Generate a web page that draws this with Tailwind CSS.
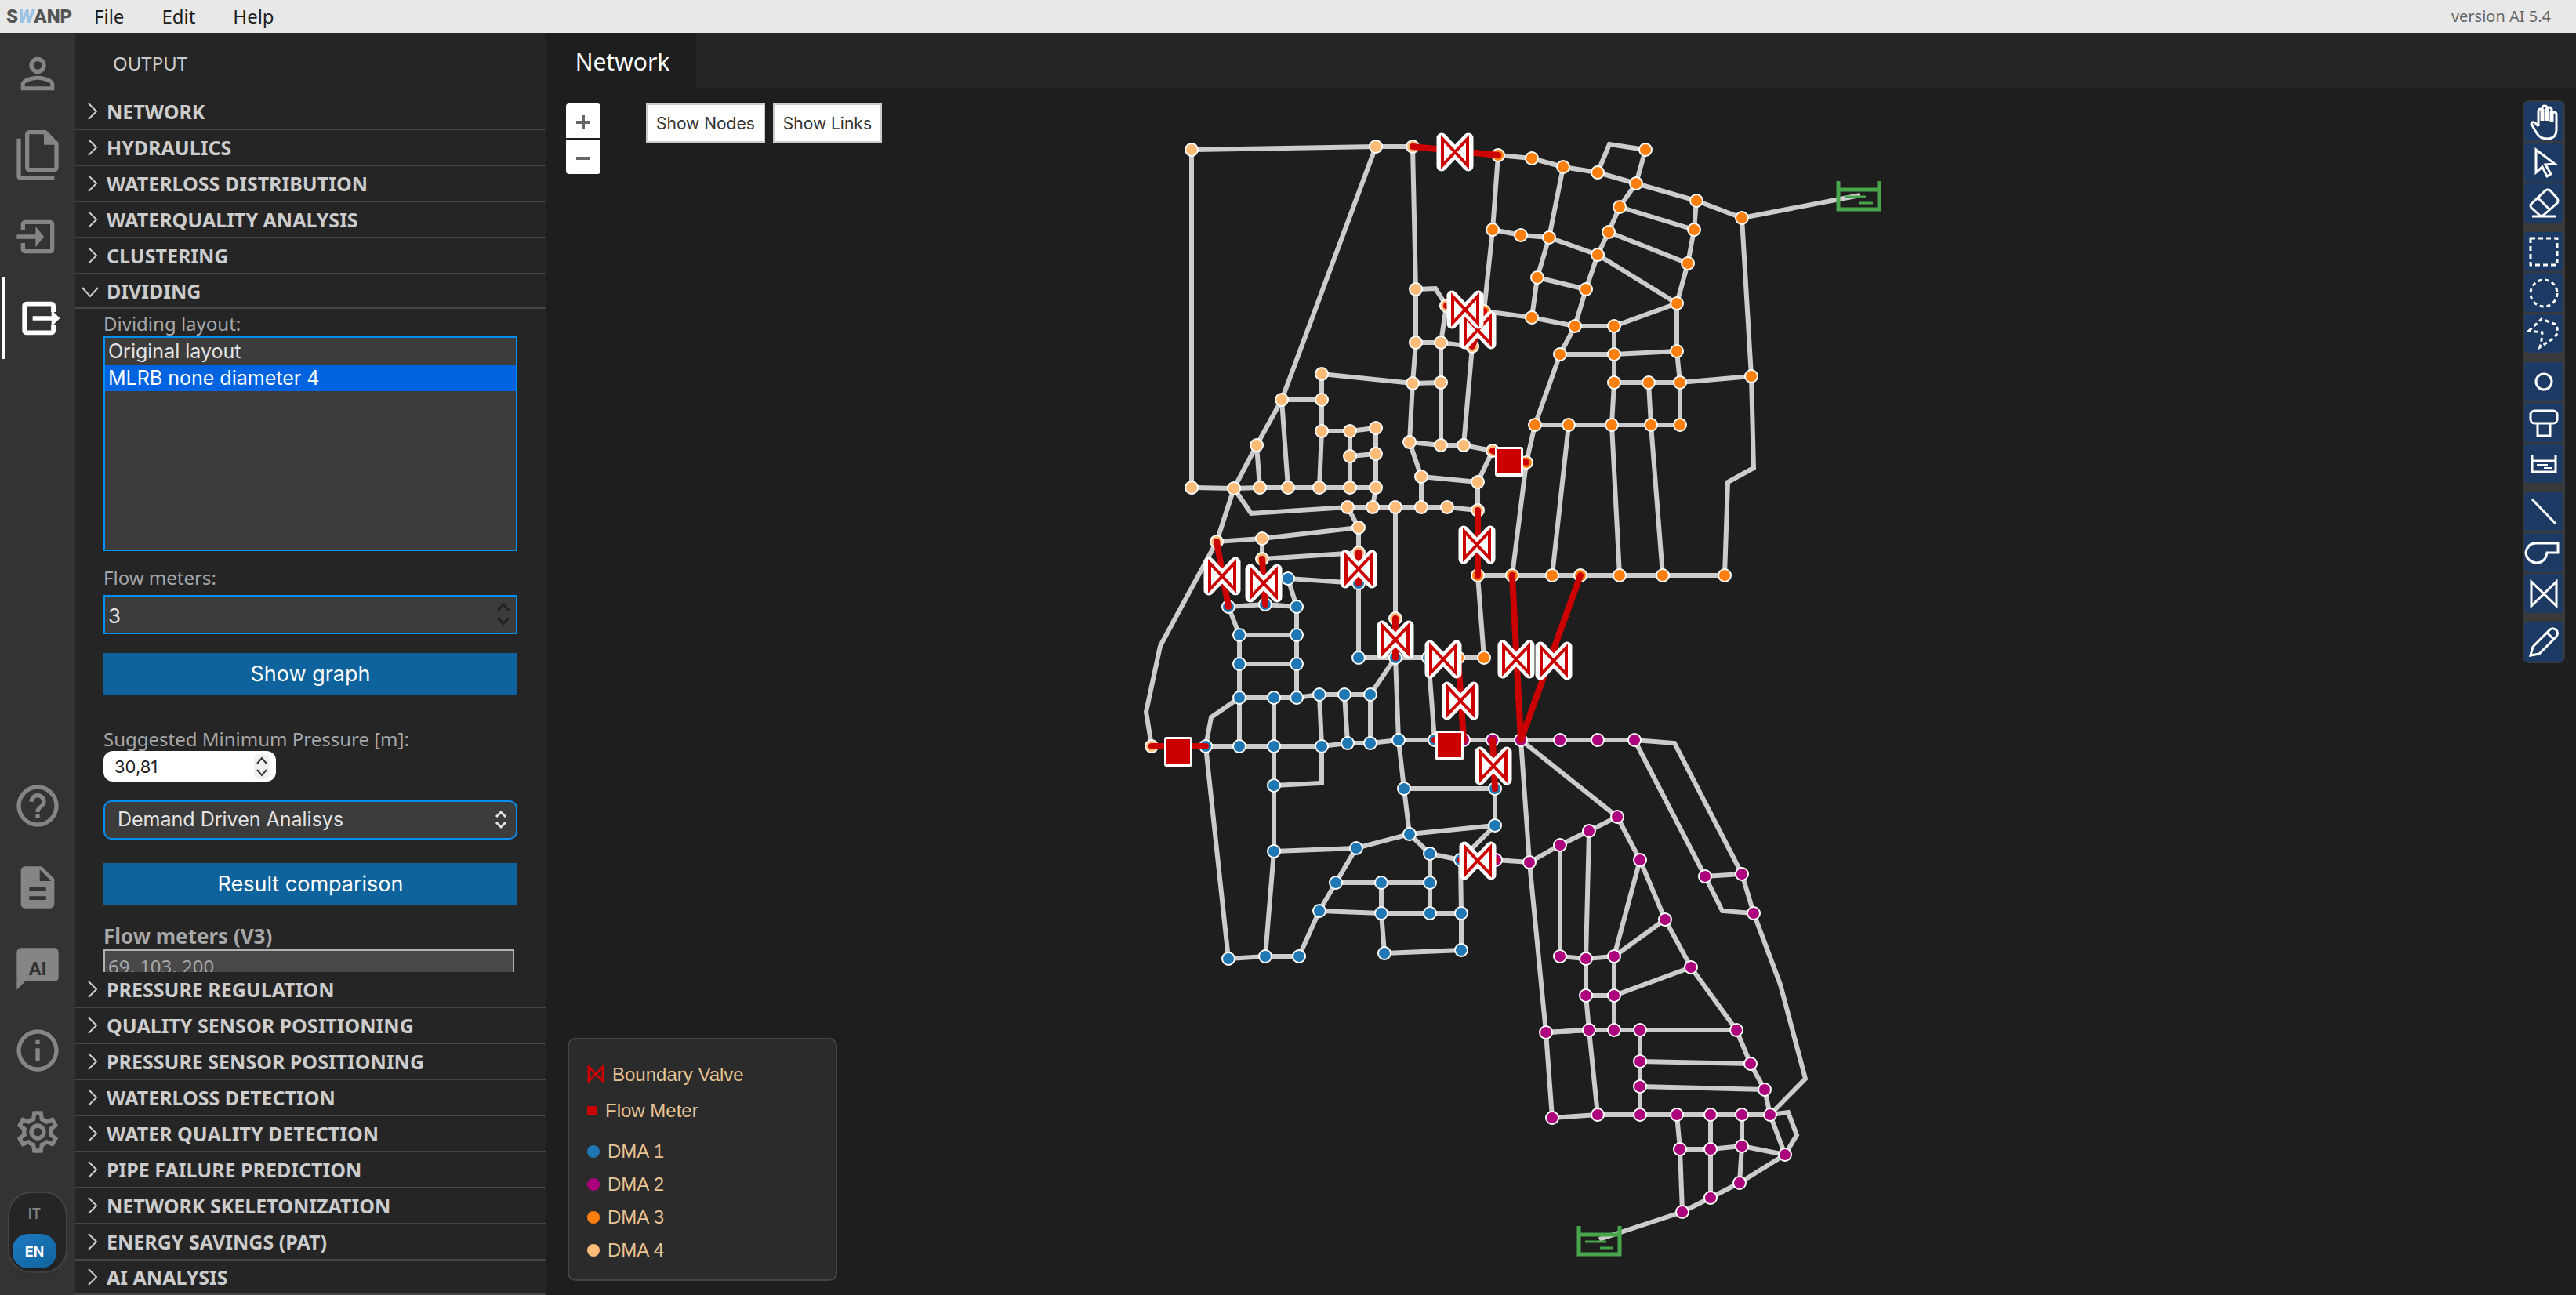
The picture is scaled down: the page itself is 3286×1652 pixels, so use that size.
<!DOCTYPE html>
<html lang="en">
<head>
    <meta charset="UTF-8" />
    <meta name="viewport" content="width=device-width, initial-scale=1.0" />
    <title>SWANP - Network</title>
    <script src="https://cdn.jsdelivr.net/npm/@tailwindcss/browser@4"></script>
    <style>
        body { font-family: 'Noto Sans', 'Open Sans', sans-serif; }
        .ui { font-family: 'Inter', 'Liberation Sans', sans-serif; }
        .legend { font-family: 'Liberation Sans', Arial, sans-serif; }
        .logo { font-family: 'Roboto', sans-serif; }
        .layouts option { padding: 2px 4px 0; height: 34px; line-height: 34px; }
        .layouts option:checked { background: linear-gradient(#0064e1, #0064e1); color: #fff; }
        input[type=number] { appearance: textfield; }
        input[type=number]::-webkit-inner-spin-button { display: none; }
    </style>
</head>
<body class="bg-[#1e1e1e] text-[#cccccc] h-screen flex flex-col overflow-hidden text-[24px]">

    <header class="h-[42px] shrink-0 bg-[#e8e8e8] text-[#1e1e1e] flex items-center pl-2 pr-8">
        <span class="logo w-28 text-[24px] font-black text-[#555555] leading-none">S<span class="text-[#9cc3e4] italic">W</span>ANP</span>
        <nav class="flex gap-12">
            <a href="#">File</a>
            <a href="#">Edit</a>
            <a href="#">Help</a>
        </nav>
        <span class="ml-auto text-[20px] text-[#666666]">version AI 5.4</span>
    </header>

    <div class="flex flex-1 min-h-0">

        <!-- Activity bar -->
        <aside class="w-24 shrink-0 bg-[#333333] text-[#858585] flex flex-col">
            <button aria-label="User" class="h-[104px] flex items-center justify-center">
                <svg class="size-16" viewBox="0 0 24 24" fill="currentColor"><path d="M12,4A4,4 0 0,1 16,8A4,4 0 0,1 12,12A4,4 0 0,1 8,8A4,4 0 0,1 12,4M12,6A2,2 0 0,0 10,8A2,2 0 0,0 12,10A2,2 0 0,0 14,8A2,2 0 0,0 12,6M12,13C14.67,13 20,14.33 20,17V20H4V17C4,14.33 9.33,13 12,13M12,14.9C9.03,14.9 5.9,16.36 5.9,17V18.1H18.1V17C18.1,16.36 14.97,14.9 12,14.9Z"/></svg>
            </button>
            <button aria-label="Files" class="h-[104px] flex items-center justify-center">
                <svg class="size-16" viewBox="0 0 24 24" fill="currentColor"><path fill-rule="evenodd" d="M8 0H16L22 6V18A2 2 0 0 1 20 20H8A2 2 0 0 1 6 18V2A2 2 0 0 1 8 0ZM8 2V18H20V7H15V2Z"/><path d="M2 4H4V22H20V24H4A2 2 0 0 1 2 22Z"/></svg>
            </button>
            <button aria-label="Input" class="h-[104px] flex items-center justify-center">
                <svg class="size-16" viewBox="0 0 24 24" fill="currentColor"><path d="M6 4H18A2 2 0 0 1 20 6V18A2 2 0 0 1 18 20H6A2 2 0 0 1 4 18V15H6V18H18V6H6V9H4V6A2 2 0 0 1 6 4Z"/><path d="M2 11H11V7L15 12L11 17V13H2Z"/></svg>
            </button>
            <button aria-label="Output" class="h-[104px] flex items-center justify-center text-white border-l-4 border-white ml-0.5 pr-2">
                <svg class="size-16" viewBox="0 0 24 24" fill="currentColor"><path d="M7 4H19A2 2 0 0 1 21 6V9H18.800V6.200H7.200V17.800H18.800V15H21V18A2 2 0 0 1 19 20H7A2 2 0 0 1 5 18V6A2 2 0 0 1 7 4Z"/><path d="M10 11H19V8L23 12L19 16V13H10Z"/></svg>
            </button>

            <div class="mt-auto mb-7 flex flex-col">
                <button aria-label="Help" class="h-[104px] flex items-center justify-center">
                    <svg class="size-16" viewBox="0 0 24 24" fill="currentColor"><path d="M11,18H13V16H11V18M12,2A10,10 0 0,0 2,12A10,10 0 0,0 12,22A10,10 0 0,0 22,12A10,10 0 0,0 12,2M12,20C7.590,20 4,16.410 4,12C4,7.590 7.590,4 12,4C16.410,4 20,7.590 20,12C20,16.410 16.410,20 12,20M12,6A4,4 0 0,0 8,10H10A2,2 0 0,1 12,8A2,2 0 0,1 14,10C14,12 11,11.750 11,15H13C13,12.750 16,12.500 16,10A4,4 0 0,0 12,6Z"/></svg>
                </button>
                <button aria-label="Report" class="h-[104px] flex items-center justify-center">
                    <svg class="size-16" viewBox="0 0 24 24" fill="currentColor"><path d="M13,9H18.500L13,3.500V9M6,2H14L20,8V20A2,2 0 0,1 18,22H6C4.890,22 4,21.100 4,20V4C4,2.890 4.890,2 6,2M16,18V16.200H8V18H16M16,13.800V12H8V13.800H16Z"/></svg>
                </button>
                <button aria-label="AI chat" class="h-[104px] flex items-center justify-center">
                    <svg class="size-16" viewBox="0 0 24 24" fill="currentColor"><path d="M4 2H20A2 2 0 0 1 22 4V16A2 2 0 0 1 20 18H6L2 22V4A2 2 0 0 1 4 2Z"/><text x="12" y="15" text-anchor="middle" font-size="9" font-weight="700" font-family="Roboto, sans-serif" fill="#333333">AI</text></svg>
                </button>
                <button aria-label="Info" class="h-[104px] flex items-center justify-center">
                    <svg class="size-16" viewBox="0 0 24 24" fill="currentColor"><path d="M11,9H13V7H11M12,20C7.590,20 4,16.410 4,12C4,7.590 7.590,4 12,4C16.410,4 20,7.590 20,12C20,16.410 16.410,20 12,20M12,2A10,10 0 0,0 2,12A10,10 0 0,0 12,22A10,10 0 0,0 22,12A10,10 0 0,0 12,2M11,17H13V11H11V17Z"/></svg>
                </button>
                <button aria-label="Settings" class="h-[104px] flex items-center justify-center">
                    <svg class="size-16" viewBox="0 0 24 24" fill="currentColor"><path d="M12,8A4,4 0 0,1 16,12A4,4 0 0,1 12,16A4,4 0 0,1 8,12A4,4 0 0,1 12,8M12,10A2,2 0 0,0 10,12A2,2 0 0,0 12,14A2,2 0 0,0 14,12A2,2 0 0,0 12,10M10,22C9.75,22 9.54,21.82 9.5,21.58L9.13,18.93C8.5,18.68 7.96,18.34 7.44,17.94L4.95,18.95C4.73,19.03 4.46,18.95 4.34,18.73L2.34,15.27C2.21,15.05 2.27,14.78 2.46,14.63L4.57,12.97L4.5,12L4.57,11L2.46,9.37C2.27,9.22 2.21,8.95 2.34,8.73L4.34,5.27C4.46,5.05 4.73,4.96 4.95,5.05L7.44,6.05C7.96,5.66 8.5,5.32 9.13,5.07L9.5,2.42C9.54,2.18 9.75,2 10,2H14C14.25,2 14.46,2.18 14.5,2.42L14.87,5.07C15.5,5.32 16.04,5.66 16.56,6.05L19.05,5.05C19.27,4.96 19.54,5.05 19.66,5.27L21.66,8.73C21.79,8.95 21.73,9.22 21.54,9.37L19.43,11L19.5,12L19.43,13L21.54,14.63C21.73,14.78 21.79,15.05 21.66,15.27L19.66,18.73C19.54,18.95 19.27,19.04 19.05,18.95L16.56,17.95C16.04,18.34 15.5,18.68 14.87,18.93L14.5,21.58C14.46,21.82 14.25,22 14,22H10M11.25,4L10.88,6.61C9.68,6.86 8.62,7.5 7.85,8.39L5.44,7.35L4.69,8.65L6.8,10.2C6.4,11.37 6.4,12.64 6.8,13.8L4.68,15.36L5.43,16.66L7.86,15.62C8.63,16.5 9.68,17.14 10.87,17.38L11.24,20H12.76L13.13,17.39C14.32,17.14 15.37,16.5 16.14,15.62L18.57,16.66L19.32,15.36L17.2,13.81C17.6,12.64 17.6,11.37 17.2,10.2L19.31,8.65L18.56,7.35L16.15,8.39C15.38,7.5 14.32,6.86 13.12,6.62L12.75,4H11.25Z"/></svg>
                </button>
                <div class="ui mt-6 mx-2.5 h-[104px] rounded-[30px] border-2 border-[#444444] bg-[#252526] flex flex-col justify-between pt-3 pb-1 pl-1 pr-3 text-[18px]">
                    <button class="h-7 font-medium">IT</button>
                    <button class="h-11 rounded-[20px] bg-linear-to-br from-[#1f7ac2] to-[#0e639c] text-white font-bold shadow-lg">EN</button>
                </div>
            </div>
        </aside>

        <!-- Output side panel -->
        <section class="w-[600px] shrink-0 bg-[#252526] flex flex-col">
            <h2 class="h-[78px] shrink-0 pl-12 flex items-center">OUTPUT</h2>
            <div id="sections-top" class="shrink-0"></div>

            <div class="flex-1 min-h-0 overflow-hidden pl-9 pr-9 text-[#a7a7a7]">
                <label for="layout" class="block h-[35px] leading-[37px]">Dividing layout:</label>
                <select id="layout" size="8" class="layouts ui block w-full h-[274px] border-2 border-[#0090f1] bg-[#3c3c3c] text-[#e4e4e4] text-[25px] overflow-hidden outline-none">
                    <option>Original layout</option>
                    <option selected>MLRB none diameter 4</option>
                </select>

                <label for="meters" class="block mt-4 h-10 leading-[35px]">Flow meters:</label>
                <div class="relative">
                    <input id="meters" type="number" value="3" class="ui block w-full h-[50px] border-2 border-[#0090f1] bg-[#3c3c3c] text-[#e4e4e4] text-[26px] pl-1 pt-0.5 outline-none" />
                    <svg class="absolute right-2 top-2 w-5 h-8" viewBox="0 0 20 32" fill="none" stroke="#222222" stroke-width="3"><path d="M3 12L10 4L17 12M3 21L10 29L17 21"/></svg>
                </div>
                <button class="ui block w-full h-[54px] mt-6 bg-[#0e639c] text-white text-[27px]">Show graph</button>

                <label for="pressure" class="block mt-10 h-[31px] leading-[31px]">Suggested Minimum Pressure [m]:</label>
                <div class="relative w-[220px]">
                    <input id="pressure" type="text" inputmode="decimal" value="30,81" class="ui block w-full h-[39px] rounded-xl bg-white text-[#222222] text-[22px] pl-3.5 outline-none" />
                    <svg class="absolute right-2 top-1 w-5 h-8" viewBox="0 0 20 32" fill="none"><rect width="20" height="32" rx="6" fill="#f1f1f1"/><path d="M4 12L10 5L16 12M4 20L10 27L16 20" stroke="#333333" stroke-width="2"/></svg>
                </div>

                <div class="relative mt-6">
                    <select aria-label="Analysis type" class="ui block w-full h-[50px] appearance-none rounded-[10px] border-2 border-[#0090f1] bg-[#3c3c3c] text-[#e4e4e4] text-[25px] pl-4 outline-none">
                        <option>Demand Driven Analisys</option>
                    </select>
                    <svg class="absolute right-3 top-3 w-[18px] h-[26px]" viewBox="0 0 18 26" fill="none" stroke="#e4e4e4" stroke-width="3"><path d="M3 9L9 3L15 9M3 16L9 22L15 16"/></svg>
                </div>
                <button class="ui block w-full h-[54px] mt-[30px] bg-[#0e639c] text-white text-[27px]">Result comparison</button>

                <label for="meters-v3" class="block mt-5 h-9 leading-[38px] font-bold text-[26px]">Flow meters (V3)</label>
                <textarea id="meters-v3" readonly class="block w-[524px] h-24 resize-none border-2 border-[#b0b0b0] bg-[#484848] text-[#a7a7a7] px-1 py-0.5 outline-none">69, 103, 200</textarea>
            </div>

            <div id="sections-bottom" class="shrink-0"></div>
        </section>

        <!-- Map -->
        <main class="flex-1 min-w-0 flex flex-col">
            <div class="h-[70px] shrink-0 bg-[#252526] flex">
                <button class="w-48 pt-0.5 pl-1 bg-[#1e1e1e] text-white text-[30px]">Network</button>
            </div>
            <div class="relative flex-1 min-h-0">
                <svg id="map" class="absolute inset-0 w-full h-full" viewBox="696 112 2590 1540">
                    <defs>
                        <g id="valve">
                            <path d="M-17 -18L17 18V-18L-17 18Z" fill="#fff" stroke="#fff" stroke-width="13" stroke-linejoin="round"/>
                            <path d="M-16 -17L16 17V-17L-16 17Z" fill="#fff" stroke="#cc0000" stroke-width="4"/>
                        </g>
                        <g id="meter">
                            <rect x="-18" y="-19" width="36" height="38" rx="3" fill="#fff"/>
                            <rect x="-15" y="-16" width="30" height="31" fill="#cc0000"/>
                        </g>
                        <g id="reservoir" fill="none" stroke="#49a54b">
                            <path d="M-26 -19V17H26V-19M-26 -8H26" stroke-width="5"/>
                            <path d="M-18 1H9M1 9H18" stroke-width="3"/>
                        </g>
                    </defs>
                    <g id="pipes" fill="none" stroke="#cccccc" stroke-width="6"></g>
                    <g id="nodes" stroke="#ffffff" stroke-width="2"></g>
                    <g id="cuts" fill="none" stroke="#cc0000" stroke-width="8" stroke-linecap="round"></g>
                    <g id="symbols"></g>
                </svg>

                <div class="absolute left-[26px] top-5 flex flex-col gap-0.5 text-[#666666]">
                    <button aria-label="Zoom in" class="size-11 pt-1 bg-white rounded-t flex items-center justify-center">
                        <svg class="size-[18px]" viewBox="0 0 18 18" stroke="currentColor" stroke-width="4"><path d="M0 9H18M9 0V18"/></svg>
                    </button>
                    <button aria-label="Zoom out" class="size-11 pt-1 bg-white rounded-b flex items-center justify-center">
                        <svg class="size-[18px]" viewBox="0 0 18 18" stroke="currentColor" stroke-width="4"><path d="M0 9H18"/></svg>
                    </button>
                </div>

                <div class="ui absolute left-32 top-5 flex gap-2.5 text-[21px] text-[#333333]">
                    <button class="h-[50px] px-[11px] pt-0.5 bg-white border-2 border-[#cccccc]">Show Nodes</button>
                    <button class="h-[50px] px-[11px] pt-0.5 bg-white border-2 border-[#cccccc]">Show Links</button>
                </div>

                <div class="legend absolute left-7 bottom-[18px] w-[344px] h-[310px] rounded-[10px] border-2 border-[#444444] bg-[#2b2b2b] text-[#e8c494] pl-[23px] pt-[22px]">
                    <ul>
                        <li class="flex items-center h-[46px] gap-2.5">
                            <svg class="w-[22px] h-6" viewBox="0 0 22 24" fill="none" stroke="#cc0000" stroke-width="3"><path d="M2 2L20 20V2L2 20Z"/></svg>
                            Boundary Valve
                        </li>
                        <li class="flex items-center h-[46px] gap-[11px]"><span class="size-3 bg-[#cc0000]"></span>Flow Meter</li>
                    </ul>
                    <ul class="mt-2">
                        <li class="flex items-center h-[42px] gap-2.5"><span class="size-4 rounded-full bg-[#1f77b4]"></span>DMA 1</li>
                        <li class="flex items-center h-[42px] gap-2.5"><span class="size-4 rounded-full bg-[#ad007c]"></span>DMA 2</li>
                        <li class="flex items-center h-[42px] gap-2.5"><span class="size-4 rounded-full bg-[#ff7f0e]"></span>DMA 3</li>
                        <li class="flex items-center h-[42px] gap-2.5"><span class="size-4 rounded-full bg-[#ffbb78]"></span>DMA 4</li>
                    </ul>
                </div>

                <!-- Drawing tools -->
                <div id="tools" class="absolute right-3.5 top-4 p-0.5 rounded-lg bg-[#3a3a3a] flex flex-col gap-3"></div>
            </div>
        </main>
    </div>

    <script>
        // Accordion headers
        const topSections = ['NETWORK', 'HYDRAULICS', 'WATERLOSS DISTRIBUTION', 'WATERQUALITY ANALYSIS', 'CLUSTERING', 'DIVIDING'];
        const bottomSections = ['PRESSURE REGULATION', 'QUALITY SENSOR POSITIONING', 'PRESSURE SENSOR POSITIONING', 'WATERLOSS DETECTION',
            'WATER QUALITY DETECTION', 'PIPE FAILURE PREDICTION', 'NETWORK SKELETONIZATION', 'ENERGY SAVINGS (PAT)', 'AI ANALYSIS'];

        function sectionHeader(name) {
            const open = name === 'DIVIDING';
            const arrow = open ? 'M1 7L11 18L21 7' : 'M9 1L19 11L9 21';
            return `
                <button aria-expanded="${open}" class="w-full h-[46px] last:h-11 border-b-2 border-[#454545] pl-2 flex items-center gap-2.5 font-bold text-[25px] text-[#cccccc]">
                    <svg class="size-[22px]" viewBox="0 0 22 22" fill="none" stroke="#cccccc" stroke-width="2"><path d="${arrow}"/></svg>
                    <span class="pt-0.5">${name}</span>
                </button>`;
        }
        document.getElementById('sections-top').innerHTML = topSections.map(sectionHeader).join('');
        document.getElementById('sections-bottom').innerHTML = bottomSections.map(sectionHeader).join('');

        // Drawing tools, grouped
        const tools = [
            [
                ['Pan', '<path d="M18 31V12q0-3 3-3q2 0 2 2V8q0-3 3-3t3 3V10q0-3 3-3t3 3V15q0-2 3-2t3 3V35Q41 47 29 47Q20 47 16 40L9 28Q10 24 14 27L18 31"/><path stroke-width="5" d="M23 9V24M29 8V24M35 12V25"/>'],
                ['Select', '<path d="M15 9L39 27L27 28L34 40L29 43L23 31L15 38Z"/>'],
                ['Erase', '<path d="M27 9Q30 7 33 9L42 19Q44 22 42 25L25 40Q22 43 19 40L9 31Q7 28 9 26ZM18 19L32 33M10 42H40"/>']
            ],
            [
                ['Select rectangle', '<path stroke-dasharray="6 4" d="M8 8H42V42H8Z"/>'],
                ['Select circle', '<circle stroke-dasharray="5 4" cx="25" cy="26" r="17"/>'],
                ['Select lasso', '<path stroke-dasharray="5 4" d="M6 22L22 7L41 14L43 24L38 31L20 43L22 34L23 24Z"/>']
            ],
            [
                ['Add node', '<circle cx="25" cy="25" r="10"/>'],
                ['Add tank', '<rect x="8" y="10" width="34" height="16" rx="5"/><path d="M17 26V42H33V26"/>'],
                ['Add reservoir', '<path d="M10 15V36H40V15M10 22H40"/><path stroke-width="2" d="M16 27H30M25 31H35"/>']
            ],
            [
                ['Add pipe', '<path d="M10 9L40 40"/>'],
                ['Add pump', '<path d="M43 13V25H29Q27 38 15 38Q3 36 2 25Q4 13 15 13Z"/>'],
                ['Add valve', '<path d="M9 10L41 41V10L9 41Z"/>']
            ],
            [
                ['Edit', '<path d="M8 42L11 31L33 9Q37 6 41 10Q44 14 41 18L19 40ZM29 13L37 21"/>']
            ]
        ];
        document.getElementById('tools').innerHTML = tools.map(group =>
            '<div class="flex flex-col gap-0.5">' + group.map(([label, shape]) => `
                <button aria-label="${label}" class="size-[50px] rounded bg-[#1c3a63]">
                    <svg class="size-[50px]" viewBox="0 0 50 50" fill="none" stroke="#ffffff" stroke-width="3">${shape}</svg>
                </button>`).join('') + '</div>').join('');

        // Network nodes, one list per DMA (b = DMA 1, m = DMA 2, c = DMA 3, a = DMA 4)
        const nodes = {
            a: [[1520,191],[1755,187],[1802,187],[1806,369],[1845,390],[1806,437],[1838,437],[1878,442],[1686,477],[1802,489],
                [1838,488],[1635,510],[1686,510],[1603,568],[1686,550],[1722,550],[1755,546],[1722,582],[1755,579],[1798,564],
                [1838,568],[1867,568],[1904,575],[1813,608],[1885,615],[1520,622],[1574,623],[1607,622],[1643,622],[1683,622],
                [1722,622],[1755,622],[1719,647],[1751,647],[1780,647],[1813,647],[1846,647],[1885,651],[1733,673],[1552,691],
                [1610,687],[1610,713],[1733,705],[1780,789],[1469,952]],
            b: [[1643,738],[1733,744],[1567,774],[1614,771],[1654,774],[1581,810],[1654,810],[1581,847],[1654,847],[1581,890],
                [1625,890],[1654,890],[1683,886],[1715,886],[1748,886],[1538,952],[1581,952],[1625,952],[1686,952],[1719,948],
                [1748,948],[1784,944],[1830,944],[1733,839],[1780,839],[1822,839],[1625,1002],[1791,1006],[1907,1006],[1798,1064],
                [1907,1053],[1730,1082],[1625,1086],[1824,1089],[1863,1097],[1704,1126],[1762,1126],[1824,1126],[1683,1162],[1762,1165],
                [1824,1165],[1864,1165],[1567,1223],[1614,1220],[1657,1220],[1766,1216],[1864,1212]],
            c: [[1911,198],[1954,202],[1994,213],[2038,220],[2099,191],[2087,234],[2164,256],[2222,278],[2066,264],[2161,293],
                [2052,296],[2153,336],[1904,293],[1940,300],[1976,303],[2038,325],[1961,354],[2023,369],[2139,387],[1893,397],
                [1954,405],[2009,416],[2059,416],[1990,452],[2059,452],[2139,448],[2059,488],[2103,488],[2143,488],[2234,480],
                [1958,542],[2001,542],[2056,542],[2106,542],[2143,542],[1947,590],[1885,734],[1929,734],[1980,734],[2016,734],
                [2066,734],[2121,734],[2200,734],[1893,839],[1860,839]],
            m: [[1867,944],[1904,944],[1940,944],[1990,944],[2038,944],[2085,944],[2063,1042],[2027,1060],[1990,1078],[1951,1100],
                [1908,1097],[2092,1097],[2175,1118],[2222,1115],[2237,1165],[2124,1173],[2157,1234],[1990,1220],[2023,1223],[2059,1220],
                [2023,1270],[2059,1270],[1972,1317],[2027,1314],[2059,1314],[2092,1314],[2215,1314],[2092,1354],[2233,1357],[2092,1386],
                [2251,1390],[1980,1426],[2038,1422],[2092,1422],[2139,1422],[2182,1422],[2222,1422],[2258,1422],[2143,1466],[2182,1466],
                [2222,1462],[2277,1473],[2219,1509],[2182,1528],[2146,1546]]
        };
        const colors = { a: '#ffbb78', b: '#1f77b4', c: '#ff7f0e', m: '#ad007c' };

        // Runs of pipe: node ids, or x,y for a bend
        const pipes = [
            'a25 a0 a1 a2 a3 a5 a9 a19 a23 a35', 'a1 a11 a13 a26', 'a3 1831,368 a4 a6 a5', 'a6 a7 a21', 'a6 a10 a9 a8 a12 a11 a28',
            'a13 a27', 'a12 a14 a15 a16 a18 a31 a33', 'a14 a29', 'a15 a17 a18', 'a17 a30', 'a10 a20', 'a19 a20 a21 a22 a24 a37', 'a23 a24',
            'a25 a26 a27 a28 a29 a30 a31', 'a32 a33 a34 a35 a36 a37', 'a26 1596,655 a32 a38 a42 a41 a40', 'a26 a39 a40 a38',
            'a34 a43', 'a39 1480,824 1462,908 a44',
            'c0 c1 c2 c3 c5 c6 c7 c29 2237,597 2204,615 c42', 'c3 2053,184 c4 c5', 'c0 c12 c19 c20 c21 c22 c18', 'c2 c14', 'c12 c13 c14 c15 c18',
            'c5 c8 c10 c15 c17 c21 c23 c30 c35 c37', 'c6 c9 c11 c18 c25 c28 c34', 'c8 c9', 'c10 c11', 'c14 c16 c20', 'c16 c17',
            'c22 c24 c26 c32 c40', 'c23 c24 c25', 'c26 c27 c28 c29', 'c27 c33 c41', 'c30 c31 c32 c33 c34', 'c31 c38',
            'c36 c37 c38 c39 c40 c41 c42', 'c36 c43 c44', 'c7 2373,249',
            'b4 b0 b1 b23 b24 b25 b22', 'b2 b3 b4 b6 b8 b11', 'b2 b5 b7 b9 b16', 'b5 b6', 'b7 b8', 'b9 b10 b11 b12 b13 b14 b24 b21',
            'b9 1545,915 b15', 'b10 b17 b26 b32 b43', 'b12 b18 1686,999 b26', 'b13 b19', 'b14 b20',
            'b15 b16 b17 b18 b19 b20 b21 b22 m0 m1 m2 m3 m4 m5', 'b15 b42 b43 b44 b38 b35 b31', 'b32 b31 b29 b30',
            'b21 b27 b29 b33 b37 b40', 'b27 b28 b30 b34', 'b33 b34 b41 b46 b45 b39 b36', 'b35 b36 b37', 'b38 b39 b40 b41',
            'm2 m6 m7 m8 m9 m10', 'm2 m9 m22 m31', 'm8 m17 m18 m19', 'm7 m18 m20 m23 m32', 'm11 m19 m21 m24', 'm22 m23', 'm15 m19', 'm20 m21 m16',
            'm6 m11 m15 m16 m26 m28 m30 m37', 'm5 2136,948 m13 m14', 'm5 m12 m13', 'm12 2197,1162 m14 2271,1256 2303,1376 m37',
            'm22 m23 m24 m25 m26', 'm25 m27 m29 m33', 'm27 m28', 'm29 m30', 'm31 m32 m33 m34 m35 m36 m37 2281,1419 2292,1448 m41',
            'm34 m38 m44', 'm35 m39 m43', 'm36 m40 m42', 'm38 m39 m40 m41', 'm37 m41 m42 m43 m44 2040,1581'
        ];
        const cuts = ['a2 c0', 'a4 c19', 'a7 c19', 'a22 c35', 'a37 c36', 'a39 b2', 'a41 b3', 'a42 b1', 'a43 b24', 'b25 c44', 'c44 m0',
            'c37 m2', 'c39 m2', 'm1 b28', 'b34 m10', 'a44 b15', 'b22 m0'];
        const symbols = {
            valve: [[1856,194],[1885,421],[1869,395],[1884,695],[1559,735],[1612,744],[1733,726],[1780,816],[1841,841],[1863,894],
                [1934,841],[1982,843],[1905,977],[1885,1098]],
            meter: [[1925,589],[1503,959],[1849,951]],
            reservoir: [[2371,250],[2040,1583]]
        };

        function point(id) {
            return id.includes(',') ? id : nodes[id[0]][id.slice(1)].join(',');
        }
        function line(run) {
            return `<polyline points="${run.split(' ').map(point).join(' ')}"/>`;
        }
        document.getElementById('pipes').innerHTML = pipes.map(line).join('');
        document.getElementById('cuts').innerHTML = cuts.map(line).join('');
        document.getElementById('nodes').innerHTML = Object.keys(nodes).map(k =>
            nodes[k].map(([x, y]) => `<circle cx="${x}" cy="${y}" r="8" fill="${colors[k]}"/>`).join('')).join('');
        document.getElementById('symbols').innerHTML = Object.keys(symbols).map(k =>
            symbols[k].map(([x, y]) => `<use href="#${k}" x="${x}" y="${y}"/>`).join('')).join('');
    </script>
</body>
</html>
